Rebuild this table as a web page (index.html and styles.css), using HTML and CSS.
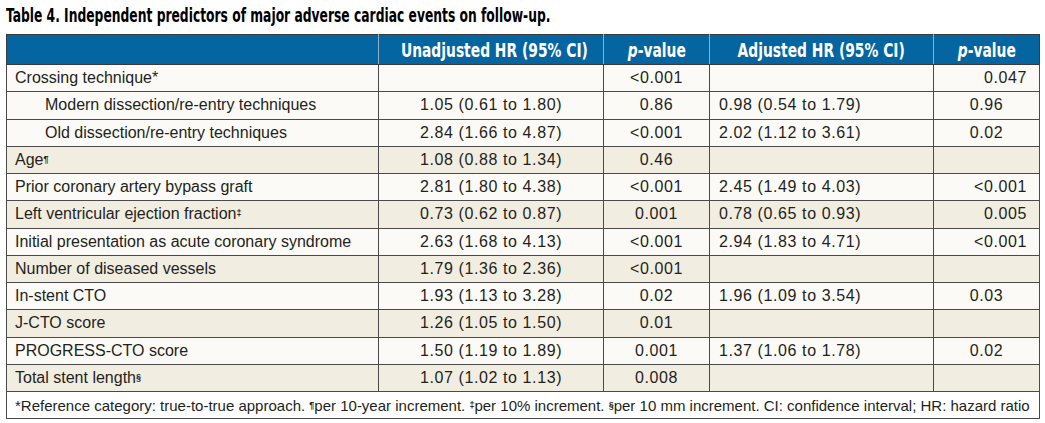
FILE: index.html
```html
<!DOCTYPE html>
<html>
<head>
<meta charset="utf-8">
<link rel="stylesheet" href="styles.css">
</head>
<body>
<h1 class="title"><span class="title-text">Table 4. Independent predictors of major adverse cardiac events on follow-up.</span></h1>
<table class="tbl">
  <colgroup>
    <col class="c1"><col class="c2"><col class="c3"><col class="c4"><col class="c5">
  </colgroup>
  <thead>
    <tr class="head">
      <th></th>
      <th><span class="hx">Unadjusted HR (95% CI)</span></th>
      <th><span class="hx"><i>p</i>-value</span></th>
      <th><span class="hx">Adjusted HR (95% CI)</span></th>
      <th><span class="hx"><i>p</i>-value</span></th>
    </tr>
  </thead>
  <tbody>
    <tr class="plain"><td class="lab">Crossing technique*</td><td class="ctr"></td><td class="ctr">&lt;0.001</td><td class="lft"></td><td class="rgt">0.047</td></tr>
    <tr class="plain"><td class="lab ind">Modern dissection/re-entry techniques</td><td class="ctr">1.05 (0.61 to 1.80)</td><td class="ctr">0.86</td><td class="lft">0.98 (0.54 to 1.79)</td><td class="ctr">0.96</td></tr>
    <tr class="plain"><td class="lab ind">Old dissection/re-entry techniques</td><td class="ctr">2.84 (1.66 to 4.87)</td><td class="ctr">&lt;0.001</td><td class="lft">2.02 (1.12 to 3.61)</td><td class="ctr">0.02</td></tr>
    <tr class="shade"><td class="lab">Age<sup>¶</sup></td><td class="ctr">1.08 (0.88 to 1.34)</td><td class="ctr">0.46</td><td class="lft"></td><td class="ctr"></td></tr>
    <tr class="plain"><td class="lab">Prior coronary artery bypass graft</td><td class="ctr">2.81 (1.80 to 4.38)</td><td class="ctr">&lt;0.001</td><td class="lft">2.45 (1.49 to 4.03)</td><td class="rgt">&lt;0.001</td></tr>
    <tr class="shade"><td class="lab">Left ventricular ejection fraction<sup>‡</sup></td><td class="ctr">0.73 (0.62 to 0.87)</td><td class="ctr">0.001</td><td class="lft">0.78 (0.65 to 0.93)</td><td class="rgt">0.005</td></tr>
    <tr class="plain"><td class="lab">Initial presentation as acute coronary syndrome</td><td class="ctr">2.63 (1.68 to 4.13)</td><td class="ctr">&lt;0.001</td><td class="lft">2.94 (1.83 to 4.71)</td><td class="rgt">&lt;0.001</td></tr>
    <tr class="shade"><td class="lab">Number of diseased vessels</td><td class="ctr">1.79 (1.36 to 2.36)</td><td class="ctr">&lt;0.001</td><td class="lft"></td><td class="ctr"></td></tr>
    <tr class="plain"><td class="lab">In-stent CTO</td><td class="ctr">1.93 (1.13 to 3.28)</td><td class="ctr">0.02</td><td class="lft">1.96 (1.09 to 3.54)</td><td class="ctr">0.03</td></tr>
    <tr class="shade"><td class="lab">J-CTO score</td><td class="ctr">1.26 (1.05 to 1.50)</td><td class="ctr">0.01</td><td class="lft"></td><td class="ctr"></td></tr>
    <tr class="plain"><td class="lab">PROGRESS-CTO score</td><td class="ctr">1.50 (1.19 to 1.89)</td><td class="ctr">0.001</td><td class="lft">1.37 (1.06 to 1.78)</td><td class="ctr">0.02</td></tr>
    <tr class="shade"><td class="lab">Total stent length<sup>§</sup></td><td class="ctr">1.07 (1.02 to 1.13)</td><td class="ctr">0.008</td><td class="lft"></td><td class="ctr"></td></tr>
  </tbody>
  <tfoot>
    <tr class="foot"><td colspan="5">*Reference category: true-to-true approach. <sup>¶</sup>per 10-year increment. <sup>‡</sup>per 10% increment. <sup>§</sup>per 10 mm increment. CI: confidence interval; HR: hazard ratio</td></tr>
  </tfoot>
</table>
</body>
</html>
```
FILE: styles.css
```css
html, body {
  margin: 0;
  padding: 0;
  background: #ffffff;
}
body {
  padding: 4px 6px 0 6px;
  font-family: "Liberation Sans", Arial, sans-serif;
  color: #231f20;
}
.title {
  margin: 0 0 8px 0;
  font-family: "DejaVu Sans Condensed", "Liberation Sans", sans-serif;
  font-weight: bold;
  font-size: 19px;
  line-height: 22px;
  color: #000;
  white-space: nowrap;
}
.title-text {
  display: inline-block;
  transform: scaleX(0.72);
  transform-origin: left center;
}
.tbl {
  width: 1034px;
  border-collapse: collapse;
  table-layout: fixed;
  font-size: 16px;
}
.c1 { width: 372px; }
.c2 { width: 225px; }
.c3 { width: 106px; }
.c4 { width: 224px; }
.c5 { width: 106px; }
.tbl td, .tbl th {
  border: 1px solid #4a4a4a;
  padding: 0;
  white-space: nowrap;
}
.head th {
  background: #0565a0;
  color: #fff;
  height: 29px;
  font-family: "DejaVu Sans Condensed", "Liberation Sans", sans-serif;
  font-weight: bold;
  font-size: 19px;
  text-align: center;
  border-color: #8fb0c8;
  border-top-color: #3a3a3a;
  border-bottom-color: #3a3a3a;
}
.head th:first-child { border-left-color: #3a3a3a; }
.head th:last-child { border-right-color: #3a3a3a; }
.hx {
  display: inline-block;
  transform: scaleX(0.81);
  transform-origin: center center;
}
.tbl tbody td {
  height: 26.25px;
}
.plain td { background: #fbfaf6; }
.shade td { background: #f1ede0; }
.lab { padding-left: 8px !important; }
.ind { padding-left: 38px !important; }
.ctr { text-align: center; letter-spacing: 0.6px; }
.lft { text-align: left; padding-left: 9px !important; letter-spacing: 0.6px; }
.rgt { text-align: right; padding-right: 12px !important; letter-spacing: 0.6px; }
sup {
  font-size: 9px;
  font-weight: bold;
  vertical-align: top;
  line-height: 12px;
  position: relative;
  top: 2px;
  letter-spacing: 0;
}
.foot td {
  background: #fff;
  height: 26px;
  font-size: 15px;
  padding-left: 8px !important;
}
```
